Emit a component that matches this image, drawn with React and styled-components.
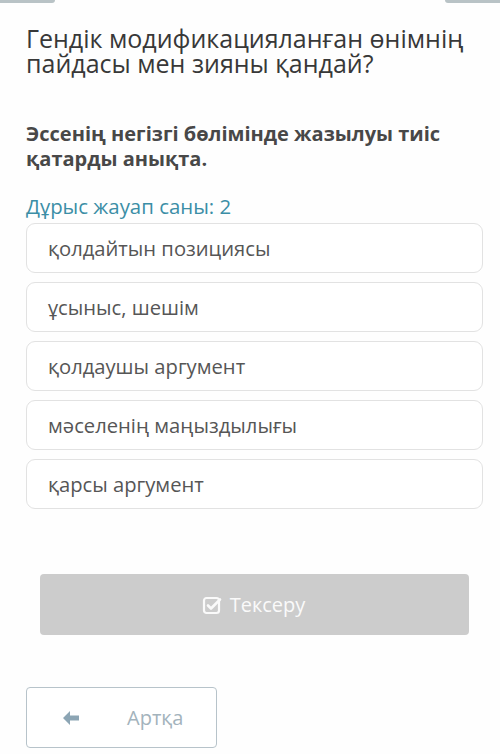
import React from "react";
import styled, { createGlobalStyle } from "styled-components";

const GlobalStyle = createGlobalStyle`
  body {
    margin: 0;
    background: #fefefe;
    font-family: "Open Sans", "Noto Sans", sans-serif;
  }
`;

const Page = styled.div`
  width: 500px;
  height: 754px;
  overflow: hidden;
  display: flex;
  flex-direction: column;
`;

const TopStrip = styled.div`
  display: flex;
  justify-content: space-between;
  height: 3px;
`;

const Tab = styled.div`
  width: 55px;
  height: 3px;
  background: #b9c3c6;
  border-radius: ${(p) => (p.right ? "0 0 0 4px" : "0 0 4px 0")};
`;

const Content = styled.div`
  padding: 23px 17px 0 26px;
  display: flex;
  flex-direction: column;
`;

const Title = styled.h1`
  margin: 0;
  font-size: 25px;
  font-weight: 400;
  line-height: 25px;
  color: #383838;
`;

const Instruction = styled.h2`
  margin: 45px 0 0;
  font-size: 20px;
  font-weight: 700;
  line-height: 25px;
  color: #484848;
`;

const Count = styled.div`
  margin-top: 23px;
  font-size: 20.4px;
  line-height: 24px;
  color: #3b8ea6;
`;

const Options = styled.div`
  display: flex;
  flex-direction: column;
  gap: 9px;
  margin-top: 5px;
`;

const Option = styled.div`
  height: 50px;
  box-sizing: border-box;
  border: 1px solid #e2e2e2;
  border-radius: 9px;
  display: flex;
  align-items: center;
  padding-left: 21px;
  font-size: 20.2px;
  color: #565656;
  background: #fff;
`;

const CheckButton = styled.button`
  margin: 65px 14px 0 14px;
  height: 61px;
  border: none;
  border-radius: 4px;
  background: #cccccc;
  color: #fafafa;
  font-family: inherit;
  font-size: 20px;
  display: flex;
  align-items: center;
  justify-content: center;
  gap: 8px;
  padding-right: 8px;
`;

const BackButton = styled.button`
  margin-top: 52px;
  width: 191px;
  height: 61px;
  box-sizing: border-box;
  border: 1px solid #b7c3ca;
  border-radius: 4px;
  background: #fff;
  font-family: inherit;
  font-size: 20px;
  color: #a3b3bc;
  display: flex;
  align-items: center;
  padding: 0 0 0 35px;
  gap: 47px;
`;

const CheckIcon = () => (
  <svg width="20" height="20" viewBox="0 0 20 20" fill="none">
    <rect x="2" y="3" width="15" height="15" rx="2.5" stroke="#fafafa" strokeWidth="2.2" />
    <path d="M6 10.5l3 3 9-9" stroke="#fafafa" strokeWidth="2.6" strokeLinecap="round" strokeLinejoin="round" />
  </svg>
);

const ArrowIcon = () => (
  <svg width="18" height="16" viewBox="0 0 18 16">
    <path d="M1 8l7-7v4.5h9v5H8V15z" fill="#8ca5b4" />
  </svg>
);

const options = [
  "қолдайтын позициясы",
  "ұсыныс, шешім",
  "қолдаушы аргумент",
  "мәселенің маңыздылығы",
  "қарсы аргумент",
];

const App = () => {
  return (
    <Page>
      <GlobalStyle />
      <TopStrip>
        <Tab />
        <Tab right />
      </TopStrip>
      <Content>
        <Title>
          Гендік модификацияланған өнімнің
          <br />
          пайдасы мен зияны қандай?
        </Title>
        <Instruction>
          Эссенің негізгі бөлімінде жазылуы тиіс
          <br />
          қатарды анықта.
        </Instruction>
        <Count>Дұрыс жауап саны: 2</Count>
        <Options>
          {options.map((o) => (
            <Option key={o}>{o}</Option>
          ))}
        </Options>
        <CheckButton>
          <CheckIcon />
          Тексеру
        </CheckButton>
        <BackButton>
          <ArrowIcon />
          Артқа
        </BackButton>
      </Content>
    </Page>
  );
};

export default App;
